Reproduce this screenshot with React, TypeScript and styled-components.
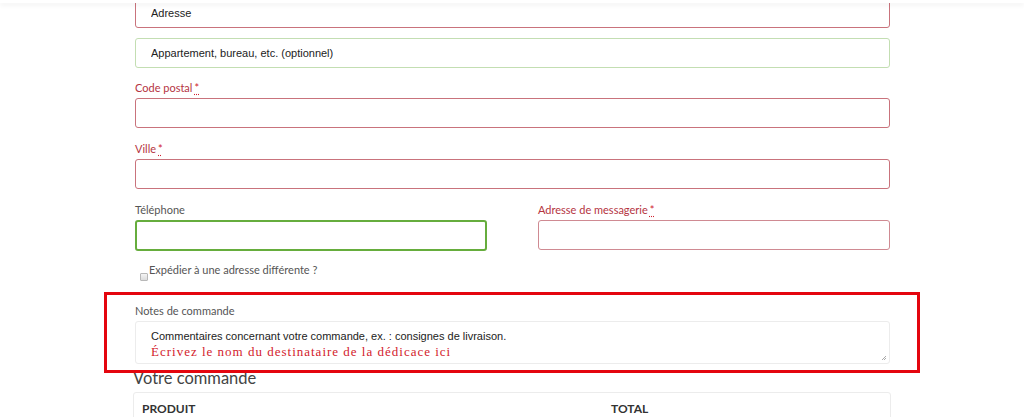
import React from "react";
import styled, { createGlobalStyle } from "styled-components";

const Global = createGlobalStyle`
  html, body { margin: 0; padding: 0; background: #fff; overflow: hidden; }
  body { font-family: Lato, "Open Sans", sans-serif; color: #333; }
  * { box-sizing: border-box; }
`;

const TopBar = styled.div`
  position: absolute;
  top: 0;
  left: 0;
  right: 0;
  height: 3px;
  background: #fff;
  box-shadow: 0 2px 5px rgba(0, 0, 0, 0.07);
  z-index: 5;
`;

const Page = styled.div`
  width: 1024px;
  height: 417px;
  overflow: hidden;
  position: relative;
`;

const Form = styled.div`
  margin-top: -2px;
  margin-left: 135px;
  width: 755px;
  display: flex;
  flex-direction: column;
`;

const Field = styled.div<{ $mb?: number }>`
  display: flex;
  flex-direction: column;
  margin-bottom: ${(p) => (p.$mb ?? 12)}px;
`;

const Row = styled.div`
  display: grid;
  grid-template-columns: 352px 352px;
  column-gap: 51px;
`;

const Label = styled.label<{ $req?: boolean }>`
  font-family: Lato, sans-serif;
  font-size: 11px;
  line-height: 18px;
  margin-bottom: 1px;
  color: ${(p) => (p.$req ? "#b5343f" : "#555")};
`;

const Req = styled.abbr`
  color: #d0212f;
  text-decoration: underline dotted;
  text-underline-offset: 2px;
  margin-left: 2px;
  border: none;
`;

type Tone = "red" | "green" | "focus" | "pink";

const borders: Record<Tone, string> = {
  red: "1px solid #c9737c",
  green: "1px solid #c3deb2",
  focus: "2px solid #66ad3d",
  pink: "1px solid #cf8a92",
};

const Input = styled.input<{ $tone: Tone; $h?: number }>`
  display: block;
  width: 100%;
  height: ${(p) => p.$h ?? 30}px;
  border: ${(p) => borders[p.$tone]};
  border-radius: 3px;
  padding: 0 15px;
  background: #fff;
  font-family: "Liberation Sans", Arial, sans-serif;
  font-size: 11px;
  color: #222;
  outline: none;
  &::placeholder {
    color: #222;
    opacity: 1;
  }
`;

const CheckRow = styled.div`
  display: flex;
  align-items: flex-end;
  margin: 12px 0 0 5px;
  height: 18px;
  font-family: Lato, sans-serif;
  font-size: 11px;
  color: #555;
`;

const FakeCheck = styled.span`
  width: 8px;
  height: 8px;
  border: 1px solid #b8b8b8;
  border-radius: 1px;
  background: linear-gradient(#f4f4f4, #dcdcdc);
  margin-right: 1px;
  margin-bottom: 0;
`;

const CheckText = styled.span`
  line-height: 14px;
  margin-bottom: 4px;
`;

const NotesField = styled.div`
  position: relative;
  display: flex;
  flex-direction: column;
  margin-top: 21px;
`;

const Highlight = styled.div`
  position: absolute;
  top: -10px;
  left: -31px;
  right: -30px;
  bottom: -9px;
  border: 3px solid #e4050e;
  pointer-events: none;
  z-index: 2;
`;

const NotesBox = styled.div`
  position: relative;
  height: 43px;
  border: 1px solid #ececec;
  border-radius: 3px;
  padding: 6px 15px 0;
  display: flex;
  flex-direction: column;
`;

const NoteLine = styled.span`
  font-family: "Liberation Sans", Arial, sans-serif;
  font-size: 11px;
  line-height: 16px;
  color: #222;
`;

const DedicaceLine = styled.span`
  font-family: "Liberation Serif", "Times New Roman", serif;
  font-size: 13px;
  line-height: 16px;
  letter-spacing: 1px;
  color: #d3212c;
`;

const Grip = styled.svg`
  position: absolute;
  right: 2px;
  bottom: 2px;
`;

const Heading = styled.h3`
  margin: 4px 0 4px -2px;
  font-family: Lato, sans-serif;
  font-weight: 400;
  font-size: 16.5px;
  line-height: 20px;
  color: #444;
`;

const Table = styled.div`
  margin: 0 -1px 0 -2px;
  border: 1px solid #ececec;
  border-radius: 3px;
  display: grid;
  grid-template-columns: 469px 1fr;
  padding: 8px 8px;
`;

const Th = styled.div`
  font-family: Lato, sans-serif;
  font-weight: 700;
  font-size: 12px;
  line-height: 16px;
  color: #333;
  text-transform: uppercase;
`;

export default function App() {
  return (
    <Page>
      <Global />
      <TopBar />
      <Form>
        <Field $mb={10}>
          <Input $tone="red" placeholder="Adresse" />
        </Field>
        <Field $mb={11}>
          <Input $tone="green" placeholder="Appartement, bureau, etc. (optionnel)" />
        </Field>
        <Field>
          <Label $req>
            Code postal<Req title="obligatoire">*</Req>
          </Label>
          <Input $tone="red" />
        </Field>
        <Field>
          <Label $req>
            Ville<Req title="obligatoire">*</Req>
          </Label>
          <Input $tone="red" />
        </Field>
        <Row>
          <Field $mb={0}>
            <Label>Téléphone</Label>
            <Input $tone="focus" $h={31} />
          </Field>
          <Field $mb={0}>
            <Label $req>
              Adresse de messagerie<Req title="obligatoire">*</Req>
            </Label>
            <Input $tone="pink" />
          </Field>
        </Row>
        <CheckRow>
          <FakeCheck />
          <CheckText>Expédier à une adresse différente ?</CheckText>
        </CheckRow>
        <NotesField>
          <Highlight />
          <Label>Notes de commande</Label>
          <NotesBox>
            <NoteLine>Commentaires concernant votre commande, ex. : consignes de livraison.</NoteLine>
            <DedicaceLine>Écrivez le nom du destinataire de la dédicace ici</DedicaceLine>
            <Grip width="6" height="6" viewBox="0 0 6 6">
              <path d="M5 1 L1 5 M5 3 L3 5" stroke="#aaa" strokeWidth="1" />
            </Grip>
          </NotesBox>
        </NotesField>
        <Heading>Votre commande</Heading>
        <Table>
          <Th>Produit</Th>
          <Th>Total</Th>
        </Table>
      </Form>
    </Page>
  );
}
